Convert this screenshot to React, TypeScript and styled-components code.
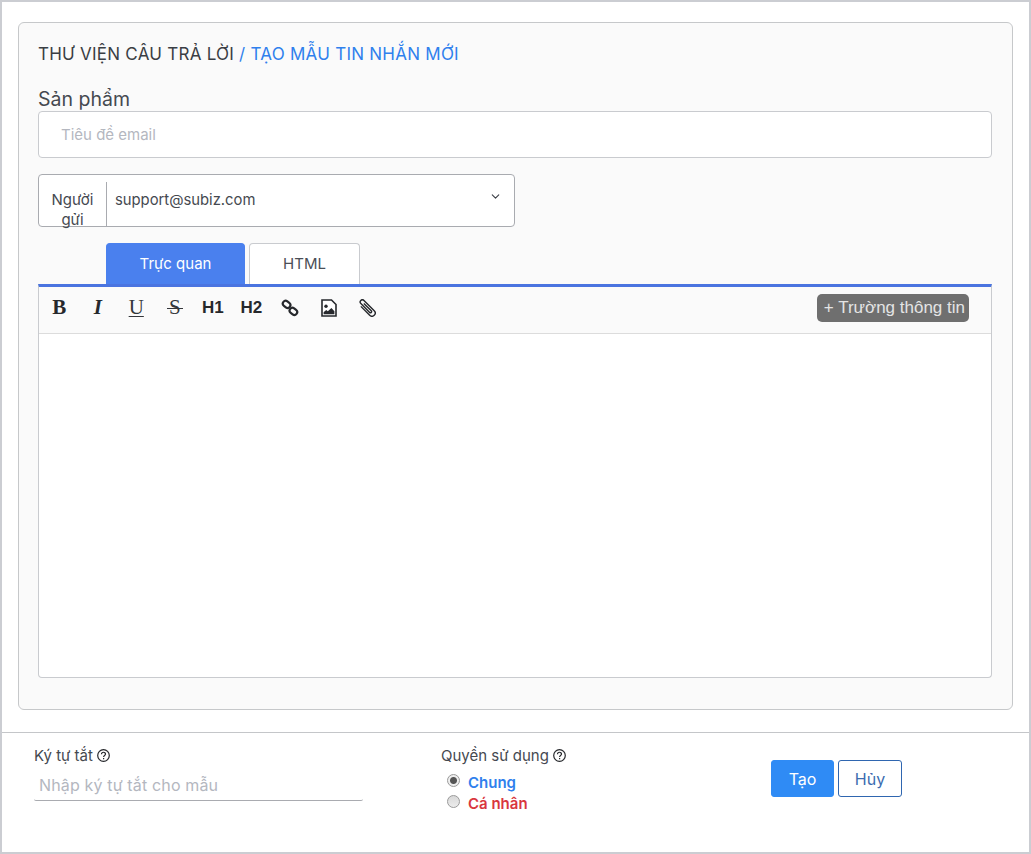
import React from "react";
import styled, { createGlobalStyle } from "styled-components";
import { FiChevronDown } from "react-icons/fi";

const GlobalStyle = createGlobalStyle`
    html, body {
        margin: 0;
        padding: 0;
        background: #fff;
    }
    * {
        box-sizing: border-box;
    }
    input::placeholder {
        color: #b4b7bf;
        opacity: 1;
    }
`;

const Page = styled.div`
    width: 1031px;
    height: 854px;
    display: flex;
    flex-direction: column;
    border: 2px solid #cbcdd2;
    font-family: Inter, "Noto Sans", "Liberation Sans", sans-serif;
    color: #454950;
    background: #fff;
`;

const Card = styled.section`
    margin: 20px 16px 0 16px;
    height: 688px;
    padding: 20px 20px 0 19px;
    display: flex;
    flex-direction: column;
    background: #fafafa;
    border: 1px solid #c6c8ca;
    border-radius: 6px;
`;

const Title = styled.div`
    font-size: 17px;
    line-height: 22px;
    letter-spacing: 0.25px;
    color: #3a3e44;
`;

const TitleLink = styled.span`
    color: #2f80ed;
`;

const FieldLabel = styled.div`
    margin: 23px 0 1px;
    font-size: 19.5px;
    line-height: 22px;
    color: #454950;
`;

const SubjectInput = styled.input`
    display: block;
    width: 100%;
    height: 47px;
    padding: 0 22px;
    flex: none;
    font: inherit;
    font-size: 15px;
    background: #fff;
    border: 1px solid #c9cbcf;
    border-radius: 4px;
`;

const SenderRow = styled.div`
    margin-top: 16px;
    width: 477px;
    height: 53px;
    flex: none;
    display: flex;
    background: #fff;
    border: 1px solid #a9abb0;
    border-radius: 4px;
`;

const SenderLabel = styled.div`
    width: 67px;
    flex: none;
    padding: 15px 7px 0;
    text-align: center;
    font-size: 15px;
    line-height: 20px;
    color: #454950;
`;

const SenderValue = styled.div`
    flex: 1;
    margin: 7px 9px -1px 0;
    padding: 0 0 8px 8px;
    display: flex;
    align-items: center;
    justify-content: space-between;
    font-size: 14.8px;
    color: #454950;
    border-left: 1px solid #a9abb0;
    border-bottom: 1px solid #a9abb0;
`;

const Chevron = styled(FiChevronDown)`
    margin: -8px 3px 0 0;
    font-size: 13px;
    color: #3b3f46;
`;

const TabList = styled.div`
    margin-top: 16px;
    padding-left: 68px;
    height: 41px;
    flex: none;
    display: flex;
    align-items: flex-end;
    gap: 4px;
`;

const Tab = styled.div<{ $active?: boolean }>`
    height: 41px;
    width: ${({ $active }) => ($active ? "139px" : "111px")};
    padding-bottom: 2px;
    display: flex;
    align-items: center;
    justify-content: center;
    font-size: 15px;
    color: ${({ $active }) => ($active ? "#fff" : "#4a4e56")};
    background: ${({ $active }) => ($active ? "#4a80ee" : "#fff")};
    border: 1px solid ${({ $active }) => ($active ? "#4a80ee" : "#c9cbcf")};
    border-bottom: none;
    border-radius: 4px 4px 0 0;
`;

const Editor = styled.div`
    height: 394px;
    flex: none;
    display: flex;
    flex-direction: column;
    background: #fff;
    border: 1px solid #c9cbcf;
    border-top: 3px solid #4a74e0;
    border-radius: 0 0 4px 4px;
`;

const Toolbar = styled.div`
    height: 47px;
    flex: none;
    display: flex;
    align-items: center;
    padding: 0 22px 5px 1px;
    background: #fafafa;
    border-bottom: 1px solid #dcdcdc;
`;

const ToolButton = styled.span`
    width: 38.5px;
    display: flex;
    justify-content: center;
    align-items: center;
    color: #26282c;
`;

const SerifButton = styled(ToolButton)<{ $italic?: boolean; $light?: boolean }>`
    font-family: "Liberation Serif", serif;
    font-size: 21px;
    font-weight: ${({ $light }) => ($light ? 400 : 700)};
    font-style: ${({ $italic }) => ($italic ? "italic" : "normal")};
`;

const UnderlineButton = styled(SerifButton)`
    text-decoration: underline;
    text-decoration-thickness: 1px;
    text-underline-offset: 2px;
    color: #33363a;
`;

const StrikeButton = styled(SerifButton)`
    position: relative;
    color: #33363a;
    &::after {
        content: "";
        position: absolute;
        left: 11px;
        right: 11px;
        top: 50%;
        height: 1px;
        background: #33363a;
    }
`;

const HeadingButton = styled(ToolButton)`
    font-family: "Liberation Sans", sans-serif;
    font-size: 17px;
    font-weight: 700;
    padding-right: 1px;
`;

const FieldButton = styled.span`
    margin-left: auto;
    height: 28px;
    padding: 0 4px 0 7px;
    display: flex;
    align-items: center;
    font-family: "Liberation Sans", sans-serif;
    font-size: 17px;
    color: #e4e4e4;
    background: #6f6f6f;
    border-radius: 5px;
    white-space: nowrap;
`;

const EditorBody = styled.div`
    flex: 1;
`;

const Divider = styled.div`
    margin-top: 22px;
    height: 1px;
    flex: none;
    background: #c4c6c9;
`;

const Footer = styled.footer`
    flex: 1;
    display: grid;
    grid-template-columns: 407px 330px 1fr;
    padding: 13px 0 0 32px;
`;

const FooterLabel = styled.div`
    display: flex;
    align-items: center;
    gap: 4px;
    height: 18px;
    font-size: 15px;
    color: #454950;
`;

const ShortcutInput = styled.input`
    display: block;
    margin-top: 8px;
    width: 329px;
    height: 29px;
    padding: 0 5px 2px;
    font: inherit;
    font-size: 16px;
    letter-spacing: 0.15px;
    background: transparent;
    border: none;
    border-bottom: 1px solid #a9abb0;
    border-radius: 2px;
`;

const RadioGroup = styled.div`
    margin-top: 8px;
    padding-left: 6px;
    display: flex;
    flex-direction: column;
    gap: 1px;
`;

const RadioRow = styled.label<{ $color: string }>`
    height: 20px;
    display: flex;
    align-items: center;
    gap: 8px;
    font-size: 15px;
    font-weight: 600;
    color: ${({ $color }) => $color};
`;

const RadioDot = styled.span<{ $checked?: boolean }>`
    width: 13px;
    height: 13px;
    margin-top: -4px;
    border-radius: 50%;
    border: 1px solid #9a9a9a;
    background: ${({ $checked }) =>
        $checked ? "radial-gradient(circle, #555 0 3px, #eee 4px)" : "linear-gradient(#d8d8d8, #ececec)"};
`;

const Actions = styled.div`
    display: flex;
    align-items: flex-start;
    gap: 4px;
    padding: 14px 0 0 0;
`;

const Button = styled.button<{ $primary?: boolean }>`
    height: 37px;
    width: ${({ $primary }) => ($primary ? "63px" : "64px")};
    padding: 0;
    font: inherit;
    font-size: 16px;
    color: ${({ $primary }) => ($primary ? "#fff" : "#3c6cb0")};
    background: ${({ $primary }) => ($primary ? "#2f8bf5" : "#fff")};
    border: 1px solid ${({ $primary }) => ($primary ? "#2f8bf5" : "#2f66b0")};
    border-radius: 3px;
`;

const LinkIcon = () => (
    <svg width="18" height="18" viewBox="0 0 18 18" fill="none" stroke="#26282c" strokeWidth="2.2">
        <rect x="1.6" y="2.6" width="8" height="5.6" rx="2.8" transform="rotate(38 5.6 5.4)" />
        <rect x="8.4" y="9.6" width="8" height="5.6" rx="2.8" transform="rotate(38 12.4 12.4)" />
    </svg>
);

const ImageIcon = () => (
    <svg width="16" height="18" viewBox="0 0 16 18">
        <path d="M1 1h9.5L15 5.5V17H1z" fill="#fff" stroke="#26282c" strokeWidth="1.6" />
        <circle cx="5" cy="7.2" r="1.7" fill="#26282c" />
        <path d="M2.6 15.2v-2l2.6-2.2 1.6 1.3L10.4 9l3 3.2v3z" fill="#26282c" />
    </svg>
);

const ClipIcon = () => (
    <svg width="18" height="18" viewBox="0 0 18 18" fill="none" stroke="#26282c" strokeWidth="1.4">
        <g transform="rotate(-45 9 9)">
            <path d="M5.8 3.5V16a3.2 3.2 0 0 0 6.4 0V1.5a2.2 2.2 0 0 0-4.4 0V14a1.1 1.1 0 0 0 2.2 0V3.5" />
        </g>
    </svg>
);

const HelpIcon = () => (
    <svg width="13" height="13" viewBox="0 0 13 13" fill="none" stroke="#26282c" strokeWidth="1.2">
        <circle cx="6.5" cy="6.5" r="5.8" />
        <path d="M4.5 5.2c0-2.6 4-2.6 4-.1 0 1.4-1.9 1.4-1.9 2.9" />
        <path d="M6.6 9v1.2" />
    </svg>
);

const App = () => {
    return (
        <Page>
            <GlobalStyle />
            <Card>
                <Title>
                    THƯ VIỆN CÂU TRẢ LỜI <TitleLink>/ TẠO MẪU TIN NHẮN MỚI</TitleLink>
                </Title>
                <FieldLabel>Sản phẩm</FieldLabel>
                <SubjectInput placeholder="Tiêu đề email" />
                <SenderRow>
                    <SenderLabel>Người gửi</SenderLabel>
                    <SenderValue>
                        support@subiz.com
                        <Chevron />
                    </SenderValue>
                </SenderRow>
                <TabList>
                    <Tab $active>Trực quan</Tab>
                    <Tab>HTML</Tab>
                </TabList>
                <Editor>
                    <Toolbar>
                        <SerifButton>B</SerifButton>
                        <SerifButton $italic>I</SerifButton>
                        <UnderlineButton $light>U</UnderlineButton>
                        <StrikeButton $light>S</StrikeButton>
                        <HeadingButton>H1</HeadingButton>
                        <HeadingButton>H2</HeadingButton>
                        <ToolButton><LinkIcon /></ToolButton>
                        <ToolButton><ImageIcon /></ToolButton>
                        <ToolButton><ClipIcon /></ToolButton>
                        <FieldButton>+ Trường thông tin</FieldButton>
                    </Toolbar>
                    <EditorBody />
                </Editor>
            </Card>
            <Divider />
            <Footer>
                <div>
                    <FooterLabel>Ký tự tắt <HelpIcon /></FooterLabel>
                    <ShortcutInput placeholder="Nhập ký tự tắt cho mẫu" />
                </div>
                <div>
                    <FooterLabel>Quyền sử dụng <HelpIcon /></FooterLabel>
                    <RadioGroup>
                        <RadioRow $color="#2f80ed"><RadioDot $checked />Chung</RadioRow>
                        <RadioRow $color="#d9363e"><RadioDot />Cá nhân</RadioRow>
                    </RadioGroup>
                </div>
                <Actions>
                    <Button $primary>Tạo</Button>
                    <Button>Hủy</Button>
                </Actions>
            </Footer>
        </Page>
    );
};

export default App;
